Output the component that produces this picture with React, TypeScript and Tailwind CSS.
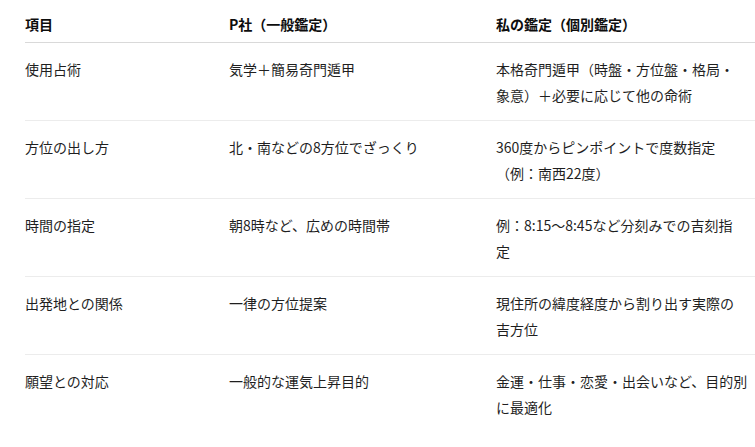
import React from "react";

const rows: { item: string; p: string[]; mine: string[] }[] = [
  {
    item: "使用占術",
    p: ["気学＋簡易奇門遁甲"],
    mine: ["本格奇門遁甲（時盤・方位盤・格局・", "象意）＋必要に応じて他の命術"],
  },
  {
    item: "方位の出し方",
    p: ["北・南などの8方位でざっくり"],
    mine: ["360度からピンポイントで度数指定", "（例：南西22度）"],
  },
  {
    item: "時間の指定",
    p: ["朝8時など、広めの時間帯"],
    mine: ["例：8:15～8:45など分刻みでの吉刻指", "定"],
  },
  {
    item: "出発地との関係",
    p: ["一律の方位提案"],
    mine: ["現住所の緯度経度から割り出す実際の", "吉方位"],
  },
  {
    item: "願望との対応",
    p: ["一般的な運気上昇目的"],
    mine: ["金運・仕事・恋愛・出会いなど、目的別", "に最適化"],
  },
];

const Lines = ({ lines }: { lines: string[] }) => (
  <div>
    {lines.map((l) => (
      <div key={l} className="whitespace-nowrap">
        {l}
      </div>
    ))}
  </div>
);

export default function App() {
  return (
    <div
      className="w-[755px] h-[447px] overflow-hidden bg-white pl-[25px] text-[14px] leading-[26px] text-[#1f1f1f]"
      style={{ fontFamily: '"Noto Sans CJK JP", "Noto Sans", sans-serif' }}
    >
      {/* header */}
      <div className="grid grid-cols-[204px_267px_1fr] pt-[11px] pb-[5px] border-b border-[#d9d9d9] font-bold text-[#0d0d0d]">
        <div>項目</div>
        <div>P社（一般鑑定）</div>
        <div>私の鑑定（個別鑑定）</div>
      </div>

      {rows.map((r, i) => (
        <div
          key={r.item}
          className={
            "grid grid-cols-[204px_267px_1fr] pt-[13px] pb-[12px] " +
            (i < rows.length - 1 ? "border-b border-[#ececec]" : "")
          }
        >
          <div>{r.item}</div>
          <Lines lines={r.p} />
          <Lines lines={r.mine} />
        </div>
      ))}
    </div>
  );
}
